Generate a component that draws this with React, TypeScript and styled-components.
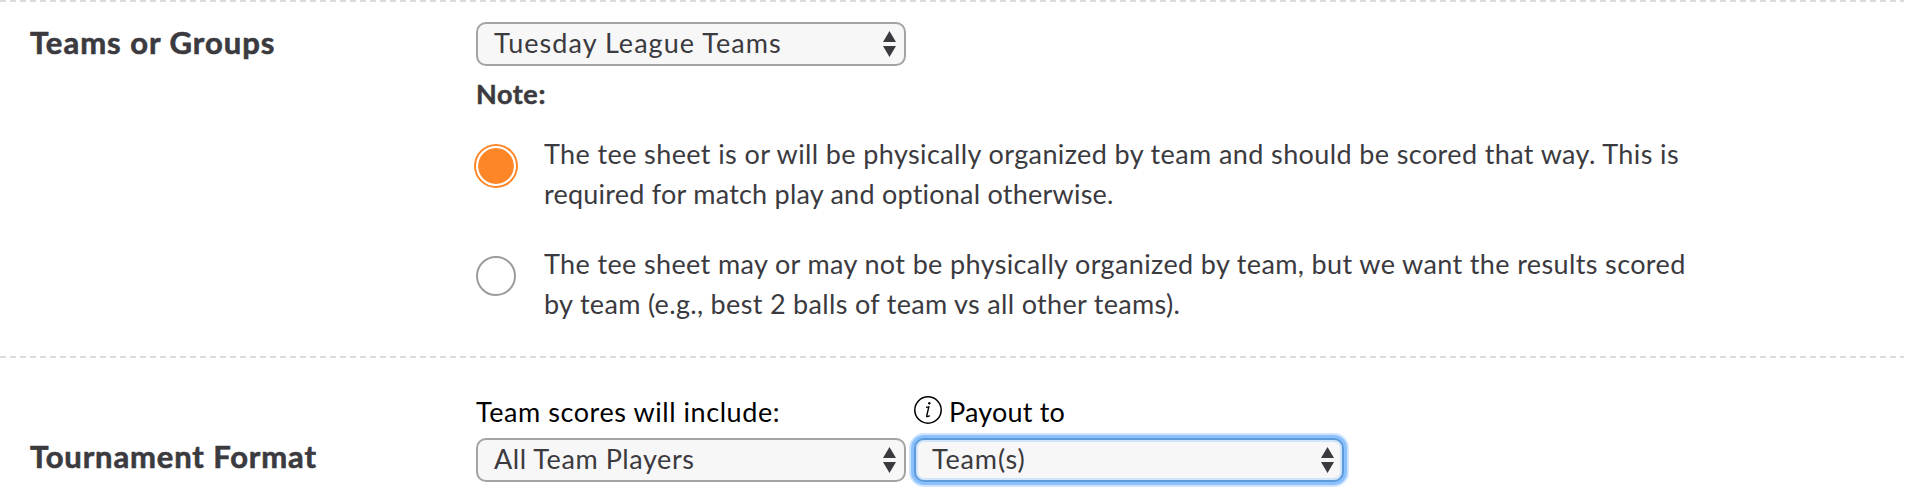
import React from "react";
import styled, { createGlobalStyle } from "styled-components";

const Global = createGlobalStyle`
  * { box-sizing: border-box; }
  body { margin: 0; background: #fff; overflow: hidden; }
`;

const Page = styled.main`
  width: 1904px;
  height: 500px;
  font-family: Lato, "Open Sans", sans-serif;
  font-size: 27px;
  color: #3b3a3f;
`;

const Section = styled.section<{ $height: number; $top: number }>`
  display: grid;
  grid-template-columns: 446px 1fr;
  height: ${(p) => p.$height}px;
  padding: ${(p) => p.$top}px 0 0 30px;
  background: repeating-linear-gradient(90deg, #dcdcdc 0 6px, transparent 6px 10px) top left / 100% 2px no-repeat;
`;

const Title = styled.h2<{ $top?: number; $spacing: number }>`
  margin: ${(p) => p.$top ?? 0}px 0 0;
  font-size: 31px;
  line-height: 40px;
  font-weight: 700;
  -webkit-text-stroke: 0.6px currentColor;
  letter-spacing: ${(p) => p.$spacing}px;
`;

const Select = styled.button<{ $focused?: boolean; $spacing: number }>`
  display: flex;
  align-items: center;
  justify-content: space-between;
  width: 430px;
  height: 44px;
  padding: 0 8px 4px 16px;
  border: 2px solid ${(p) => (p.$focused ? "#5f9bdc" : "#a3a3a3")};
  border-radius: 10px;
  background: #f7f7f7;
  box-shadow: ${(p) =>
    p.$focused
      ? "0 0 0 3px #8ac0fb, 0 0 0 5px #d0e5fd, inset 0 0 0 2px #d0e5fb"
      : "none"};
  font: inherit;
  color: inherit;
  letter-spacing: ${(p) => p.$spacing}px;
`;

const Arrows = styled.svg`
  width: 13px;
  height: 26px;
  margin-top: 4px;
  fill: #3b3a3f;
`;

const Note = styled.p`
  margin: 10px 0 21px;
  line-height: 36px;
  font-weight: 700;
  -webkit-text-stroke: 0.5px currentColor;
  letter-spacing: 0.6px;
`;

const Option = styled.label`
  display: flex;
  gap: 28px;
  height: 110px;
`;

const Radio = styled.span<{ $checked?: boolean }>`
  flex: none;
  width: 40px;
  height: 40px;
  margin-top: 13px;
  border: 2px solid ${(p) => (p.$checked ? "#fff" : "#9c9c9c")};
  border-radius: 50%;
  background: ${(p) => (p.$checked ? "#ff8626" : "#fff")};
  background-clip: padding-box;
  box-shadow: ${(p) => (p.$checked ? "0 0 0 2px #ff8626" : "none")};
`;

const OptionText = styled.span`
  padding-top: 1px;
  line-height: 40px;
  white-space: nowrap;
`;

const Line = styled.span<{ $spacing: number }>`
  display: block;
  letter-spacing: ${(p) => p.$spacing}px;
`;

const Fields = styled.div`
  display: flex;
  gap: 8px;
`;

const FieldLabel = styled.div<{ $spacing: number }>`
  display: flex;
  height: 44px;
  line-height: 36px;
  color: #000;
  letter-spacing: ${(p) => p.$spacing}px;
`;

const InfoIcon = styled.svg`
  width: 28px;
  height: 28px;
  margin: 2px 7px 0 0;
`;

function Dropdown({ value, spacing, focused }: { value: string; spacing: number; focused?: boolean }) {
  return (
    <Select type="button" $focused={focused} $spacing={spacing}>
      {value}
      <Arrows viewBox="0 0 13 26">
        <path d="M6.5 0 13 11H0ZM0 15H13L6.5 26Z" />
      </Arrows>
    </Select>
  );
}

export default function App() {
  return (
    <Page>
      <Global />
      <Section $height={356} $top={22}>
        <Title $spacing={1}>Teams or Groups</Title>
        <div>
          <Dropdown value="Tuesday League Teams" spacing={1.05} />
          <Note>Note:</Note>
          <Option>
            <Radio $checked />
            <OptionText>
              <Line $spacing={0.39}>The tee sheet is or will be physically organized by team and should be scored that way. This is</Line>
              <Line $spacing={0.23}>required for match play and optional otherwise.</Line>
            </OptionText>
          </Option>
          <Option>
            <Radio />
            <OptionText>
              <Line $spacing={0.37}>The tee sheet may or may not be physically organized by team, but we want the results scored</Line>
              <Line $spacing={0.32}>by team (e.g., best 2 balls of team vs all other teams).</Line>
            </OptionText>
          </Option>
        </div>
      </Section>
      <Section $height={144} $top={38}>
        <Title $top={42} $spacing={0.85}>Tournament Format</Title>
        <Fields>
          <div>
            <FieldLabel $spacing={0.56}>Team scores will include:</FieldLabel>
            <Dropdown value="All Team Players" spacing={0.57} />
          </div>
          <div>
            <FieldLabel $spacing={0.2}>
              <InfoIcon viewBox="0 0 28 28" fill="none" stroke="#000">
                <circle cx="14" cy="14" r="13.2" strokeWidth="1.5" />
                <path d="M12 11.4 14.8 10.8 12.7 20Q12.4 21.5 15.7 19.6" strokeWidth="1.4" />
                <circle cx="15.3" cy="7.3" r="1.2" fill="#000" stroke="none" />
              </InfoIcon>
              Payout to
            </FieldLabel>
            <Dropdown value="Team(s)" spacing={0.85} focused />
          </div>
        </Fields>
      </Section>
    </Page>
  );
}
